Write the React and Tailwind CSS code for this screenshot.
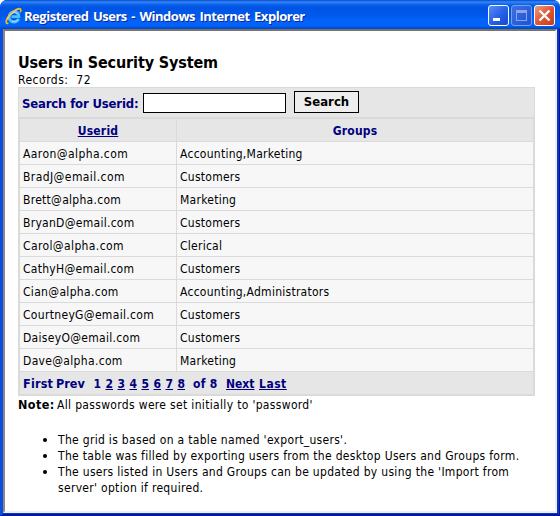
const users = [
  ["Aaron@alpha.com", "Accounting,Marketing", "tracking-[0.42px]"],
  ["BradJ@email.com", "Customers", "tracking-[0.42px]"],
  ["Brett@alpha.com", "Marketing", "tracking-[0.28px]"],
  ["BryanD@email.com", "Customers", "tracking-[0.28px]"],
  ["Carol@alpha.com", "Clerical", "tracking-[0.38px]"],
  ["CathyH@email.com", "Customers", "tracking-[0.28px]"],
  ["Cian@alpha.com", "Accounting,Administrators", "tracking-[0.32px]"],
  ["CourtneyG@email.com", "Customers", "tracking-[0.32px]"],
  ["DaiseyO@email.com", "Customers", "tracking-[0.3px]"],
  ["Dave@alpha.com", "Marketing", "tracking-[0.32px]"],
];

function ExplorerLogo() {
  return (
    <svg width="17" height="18" viewBox="0 0 17 18" className="shrink-0" fill="none">
      <path d="M13.7 11.9C12.4 14.8 8.6 15.9 6.2 14.3C3.3 12.4 3.6 7.9 6 6C9.4 3.3 13.9 5.3 13.8 9.6H6.5" stroke="#4fc0fa" strokeWidth="2.9" />
      <path d="M12.8 12.8C11.3 14.6 8.5 15 6.9 13.8M6.2 7C8 5.1 11.3 5 12.6 7.2" stroke="#b4eaff" strokeWidth="1" />
      <path d="M3.4 16.3C0 17.2.5 12.7 4.6 7.8C9 2.7 14.5.4 15.6 2.3C16.1 3.2 15.6 4.5 15 5.3" stroke="#f2b52c" strokeWidth="1.7" />
      <path d="M2.4 12.7C4.3 8.1 9.7 3.2 13.7 2.3" stroke="#ffe08a" strokeWidth=".7" />
    </svg>
  );
}

function WindowButtons() {
  return (
    <div className="flex gap-[2px]">
      <button className="flex size-[21px] items-end rounded-[3px] border border-white bg-linear-to-br from-[#5b8cf5] via-[#2863e8] to-[#1747ce] pb-1 pl-1">
        <span className="h-[3px] w-[7px] bg-white" />
      </button>
      <button className="flex size-[21px] items-center justify-center rounded-[3px] border border-[#789fe9] bg-linear-to-br from-[#3c70e2] to-[#1a52d4]">
        <span className="h-[11px] w-[11px] border border-t-[3px] border-[#8ba4ec]" />
      </button>
      <button className="flex size-[21px] items-center justify-center rounded-[3px] border border-white bg-linear-to-br from-[#ee9a7c] via-[#df5635] to-[#c33c16]">
        <svg width="13" height="13" viewBox="0 0 13 13">
          <path d="M1.5 1.5L11.5 11.5M11.5 1.5L1.5 11.5" stroke="#fff" strokeWidth="2.4" />
        </svg>
      </button>
    </div>
  );
}

export default function App() {
  return (
    <div className="h-[516px] w-[560px] bg-white font-['DejaVu_Sans_Condensed','DejaVu_Sans',sans-serif] text-[12px] leading-4 text-black">
      <div className="flex h-full flex-col overflow-hidden rounded-t-[7px] bg-[#0b4fe0]">
        <header className="flex h-[29px] shrink-0 items-center justify-between bg-[linear-gradient(#0b48c8_0px,#3187fb_2px,#1268ee_4px,#0054e3_7px,#0058ec_15px,#0364fd_22px,#0260f6_26px,#0042c8_29px)] pr-[5px] pl-[5px]">
          <div className="flex items-center gap-[2px] pt-[2px]">
            <ExplorerLogo />
            <h1 className="font-['Open_Sans',sans-serif] text-[13px] leading-4 font-bold tracking-[-0.47px] [word-spacing:1.5px] whitespace-nowrap text-white [text-shadow:1px_1px_#0a2a9b]">
              Registered Users - Windows Internet Explorer
            </h1>
          </div>
          <div className="pt-[2px]">
            <WindowButtons />
          </div>
        </header>
        <div className="flex min-h-0 flex-1 border-r border-b-2 border-l-[3px] border-r-[#001590] border-b-[#0019a0] border-l-[#0b4fe0]">
          <div className="flex min-w-0 flex-1 border-r-2 border-b border-[#0b36c4]">
            <main className="min-w-0 flex-1 border-t-2 border-r-2 border-b-2 border-l-2 border-t-[#77746a] border-r-[#f1eee4] border-b-[#f1eee4] border-l-[#8b887c] bg-white pl-[13px]">
              <h2 className="mt-[21px] h-[20px] text-[16px] leading-[22px] font-bold tracking-[-0.13px] whitespace-nowrap">Users in Security System</h2>
              <p className="h-[15px] tracking-[0.5px] whitespace-pre">Records:  72</p>
              <section className="h-[309px] w-[517px] border border-[#dadada] bg-[#dadada]">
                <div className="flex h-[29px] items-start bg-[#e6e6e6] pl-[3px]">
                  <label className="mt-[8px] w-[121px] text-[13px] leading-4 font-bold tracking-[-0.17px] whitespace-nowrap text-[#000080]">Search for Userid:</label>
                  <input className="mt-[5px] h-[20px] w-[143px] border border-black bg-white" />
                  <button className="mt-[3px] ml-2 h-[22px] w-[65px] border border-black bg-[#eeeeee] pb-px text-[13px] leading-4 font-bold">Search</button>
                </div>
                <div className="mt-[2px] ml-px w-[513px] leading-6">
                  <div className="flex h-[22px] bg-[#e6e6e6] text-center font-bold tracking-[0.2px] text-[#000080]">
                    <div className="w-[157px] border-r border-[#dadada] underline">Userid</div>
                    <div className="flex-1">Groups</div>
                  </div>
                  {users.map(([id, groups, spacing]) => (
                    <div key={id} className="flex h-[23px] border-t border-[#dadada] bg-[#f7f7f7]">
                      <div className={"w-[157px] border-r border-[#dadada] pl-[3px] " + spacing}>{id}</div>
                      <div className="flex-1 pl-[3px] tracking-[0.26px]">{groups}</div>
                    </div>
                  ))}
                </div>
                <nav className="mt-px ml-px flex h-[22px] w-[513px] bg-[#e6e6e6] pl-[3px] leading-6 font-bold text-[#000080]">
                  <span className="w-[33px] text-[12.5px] tracking-[0.2px]">First</span>
                  <span className="w-[37.5px] text-[12.5px]">Prev</span>
                  <span className="w-[12px]">1</span>
                  {[2, 3, 4, 5, 6, 7, 8].map((page) => (
                    <span key={page} className="w-[12px]"><a className="underline">{page}</a></span>
                  ))}
                  <span className="ml-[3.5px] w-[33px] tracking-[0.3px] whitespace-nowrap">of 8</span>
                  <span className="w-[33px]"><a className="underline">Next</a></span>
                  <a className="tracking-[0.5px] underline">Last</a>
                </nav>
              </section>
              <p className="mt-px flex whitespace-nowrap"><b className="w-[39px] text-[12.5px] tracking-[0.4px]">Note:</b><span className="tracking-[0.33px]">All passwords were set initially to 'password'</span></p>
              <ul className="mt-[18px] ml-10 list-disc tracking-[0.31px] whitespace-nowrap marker:text-[14px]">
                <li className="h-4">The grid is based on a table named 'export_users'.</li>
                <li className="h-4">The table was filled by exporting users from the desktop Users and Groups form.</li>
                <li>The users listed in Users and Groups can be updated by using the 'Import from<br />server' option if required.</li>
              </ul>
            </main>
          </div>
        </div>
      </div>
    </div>
  );
}
